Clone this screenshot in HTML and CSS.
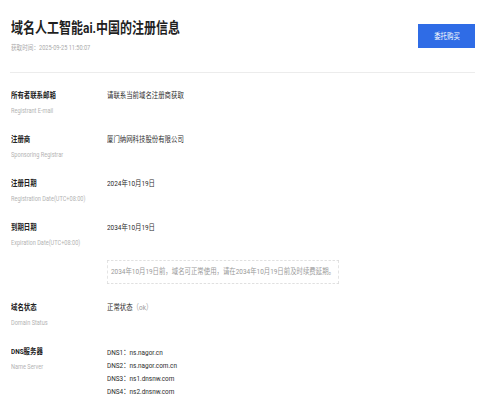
FILE: index.html
```html
<!DOCTYPE html>
<html lang="zh-CN">
<head>
<meta charset="utf-8">
<title>域名人工智能ai.中国的注册信息</title>
<link rel="stylesheet" href="styles.css">
</head>
<body>
<div class="page">
  <header class="head">
    <div class="head-text">
      <h1 class="title sq">域名人工智能ai.中国的注册信息</h1>
      <div class="time sq">获取时间：2025-09-25 11:50:07</div>
    </div>
    <a class="btn"><span class="btn-label">委托购买</span></a>
  </header>
  <dl class="info">
    <div class="row">
      <dt class="key"><div class="key-cn sq">所有者联系邮箱</div><div class="key-en sq">Registrant E-mail</div></dt>
      <dd class="val sq">请联系当前域名注册商获取</dd>
    </div>
    <div class="row">
      <dt class="key"><div class="key-cn sq">注册商</div><div class="key-en sq">Sponsoring Registrar</div></dt>
      <dd class="val sq">厦门纳网科技股份有限公司</dd>
    </div>
    <div class="row">
      <dt class="key"><div class="key-cn sq">注册日期</div><div class="key-en sq">Registration Date(UTC+08:00)</div></dt>
      <dd class="val sq">2024年10月19日</dd>
    </div>
    <div class="row">
      <dt class="key"><div class="key-cn sq">到期日期</div><div class="key-en sq">Expiration Date(UTC+08:00)</div></dt>
      <dd class="val sq">
        <div>2034年10月19日</div>
        <div class="note">2034年10月19日前，域名可正常使用，请在2034年10月19日前及时续费延期。</div>
      </dd>
    </div>
    <div class="row">
      <dt class="key"><div class="key-cn sq">域名状态</div><div class="key-en sq">Domain Status</div></dt>
      <dd class="val sq">正常状态<span class="muted">（ok）</span></dd>
    </div>
    <div class="row">
      <dt class="key"><div class="key-cn sq">DNS服务器</div><div class="key-en sq">Name Server</div></dt>
      <dd class="val dns sq">
        <div>DNS1：ns.nagor.cn</div>
        <div>DNS2：ns.nagor.com.cn</div>
        <div>DNS3：ns1.dnsnw.com</div>
        <div>DNS4：ns2.dnsnw.com</div>
      </dd>
    </div>
  </dl>
</div>
</body>
</html>
```
FILE: styles.css
```css
html, body {
  margin: 0;
  background: #fff;
}
body {
  font-family: Roboto, "Noto Sans CJK SC", sans-serif;
  color: #333;
}
/* text in this layout is horizontally condensed */
.sq {
  width: max-content;
  transform: scaleX(0.8);
  transform-origin: 0 0;
}
.page {
  width: 485px;
  box-sizing: border-box;
  padding: 0 10px 0 10px;
}
.head {
  display: flex;
  align-items: center;
  justify-content: space-between;
  padding: 18px 0 19px;
  border-bottom: 1px solid #ececec;
}
.title {
  margin: 0 0 0 1px;
  font-size: 15px;
  line-height: 20px;
  font-weight: 700;
  color: #1f1f1f;
}
.time {
  margin: 5px 0 0 1px;
  font-size: 7px;
  line-height: 10px;
  color: #aaa;
}
.btn {
  width: 57px;
  height: 24px;
  background: #2f6ce6;
  color: #fff;
  font-size: 8px;
  display: flex;
  align-items: center;
  justify-content: center;
}
.btn-label {
  display: inline-block;
  transform: scaleX(0.8);
}
.info {
  margin: 17px 0 0 1px;
}
.row {
  display: grid;
  grid-template-columns: 96px 1fr;
  margin-bottom: 18px;
}
.key {
  margin: 0;
}
.key-cn {
  font-size: 8px;
  line-height: 12px;
  font-weight: 700;
  color: #222;
}
.key-en {
  margin-top: 4px;
  font-size: 7px;
  line-height: 10px;
  color: #b3b3b3;
}
.val {
  margin: 0;
  font-size: 8px;
  line-height: 12px;
  color: #2b2b2b;
}
.note {
  width: max-content;
  margin-top: 26px;
  padding: 0 4px;
  border: 1px dashed #dcdcdc;
  line-height: 22px;
  color: #999;
}
.muted {
  color: #999;
}
.dns {
  line-height: 13px;
}
```
